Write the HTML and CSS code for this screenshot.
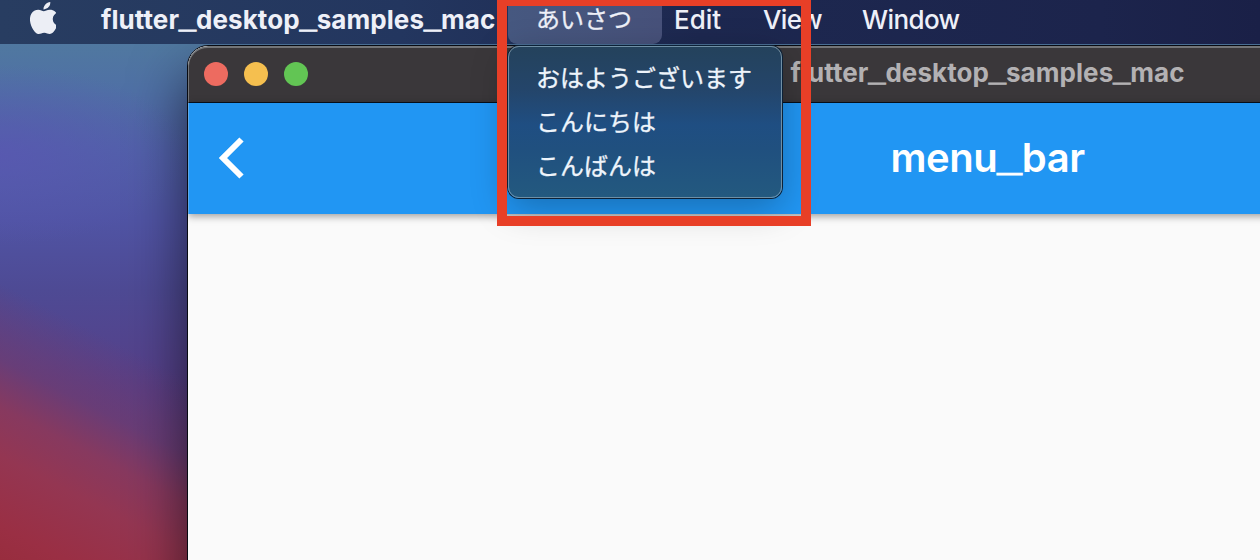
FILE: index.html
```
<!DOCTYPE html>
<html lang="ja">
<head>
<meta charset="utf-8">
<title>flutter_desktop_samples_mac</title>
<link rel="stylesheet" href="styles.css">
</head>
<body>
<div class="desktop">
  <nav class="menubar">
    <svg class="apple" viewBox="2.28 0 18.6 24" preserveAspectRatio="none"><path d="M12.152 6.896c-.948 0-2.415-1.078-3.96-1.04-2.04.027-3.91 1.183-4.961 3.014-2.117 3.675-.546 9.103 1.519 12.09 1.013 1.454 2.208 3.09 3.792 3.039 1.52-.065 2.09-.987 3.935-.987 1.831 0 2.35.987 3.96.948 1.637-.026 2.676-1.48 3.676-2.948 1.156-1.688 1.636-3.325 1.662-3.415-.039-.013-3.182-1.221-3.22-4.857-.026-3.04 2.48-4.494 2.597-4.559-1.429-2.09-3.623-2.324-4.39-2.376-2-.156-3.675 1.09-4.61 1.09zM15.53 3.83c.843-1.012 1.4-2.427 1.245-3.83-1.207.052-2.662.805-3.532 1.818-.78.896-1.454 2.338-1.273 3.714 1.338.104 2.715-.688 3.559-1.701"/></svg>
    <span class="app-name">flutter<span class="us">_</span>desktop<span class="us">_</span>samples<span class="us">_</span>mac</span>
    <span class="menu-item active">あいさつ</span>
    <span class="menu-item edit">Edit</span>
    <span class="menu-item view">View</span>
    <span class="menu-item win">Window</span>
  </nav>
  <main class="window">
    <header class="titlebar">
      <div class="lights"><i class="light close"></i><i class="light minimize"></i><i class="light expand"></i></div>
      <span class="window-title">flutter<span class="us">_</span>desktop<span class="us">_</span>samples<span class="us">_</span>mac</span>
    </header>
    <header class="appbar">
      <svg class="back" viewBox="0 0 25 42"><path d="M22.500 2.500 4 21l18.500 18.500"/></svg>
      <h1 class="page-title">menu<span class="us">_</span>bar</h1>
    </header>
    <section class="content"></section>
  </main>
  <div class="dropdown">
    <div class="option">おはようございます</div>
    <div class="option">こんにちは</div>
    <div class="option">こんばんは</div>
  </div>
  <div class="marker"></div>
</div>
</body>
</html>
```

FILE: styles.css
```
* { box-sizing: border-box; }
body {
  margin: 0;
  width: 1260px;
  height: 560px;
  overflow: hidden;
  font-family: Inter, "Noto Sans CJK JP", sans-serif;
}
.desktop {
  position: relative;
  width: 1260px;
  height: 560px;
  overflow: hidden;
  background:
    linear-gradient(207deg, rgba(112,58,115,0) 60%, rgba(112,60,112,.7) 71%, #87395f 78%, #943652 85%, #9a2f44 95%, #982d3e 100%) 0 0 / 260px 560px no-repeat,
    radial-gradient(ellipse 190px 90px at 0 155px, rgba(90,86,178,.75), rgba(88,86,172,0)),
    linear-gradient(180deg, #5078a0 44px, #4f70a5 90px, #5062a8 150px, #5054a4 220px, #4e4a94 290px, #563f88 390px, #5d3a78 560px);
}
.menubar {
  position: relative;
  display: flex;
  height: 44px;
  background: linear-gradient(90deg, #283d61, #23365f 400px, #1d2850 700px, #1c244c 1100px, #1a2047);
  color: #eef0f8;
  font-size: 26px;
  line-height: 40px;
  letter-spacing: -0.6px;
  white-space: nowrap;
}
.apple {
  width: 26px;
  height: 32px;
  margin: 2px 45px 0 30px;
  fill: #eceef5;
  flex: none;
}
.app-name {
  width: 407px;
  font-weight: 700;
  letter-spacing: 0.08px;
}
.us {
  font-family: "Liberation Sans", Arial, sans-serif;
  font-size: 1.17em;
  font-weight: 700;
  line-height: 0;
  letter-spacing: 0;
  vertical-align: 1px;
  -webkit-text-stroke: 1px currentColor;
}
.active {
  width: 154px;
  padding-left: 28px;
  border-radius: 0 0 9px 9px;
  background: linear-gradient(90deg, #465880, #47517a);
  font-size: 24px;
  -webkit-text-stroke: 0.3px currentColor;
  letter-spacing: 0;
}
.edit { width: 101px; padding-left: 12px; letter-spacing: 0; }
.view { width: 99px; }
.edit, .view, .win { font-weight: 450; }
.window {
  width: 1600px;
  height: 600px;
  margin-top: 1px;
  border: 1px solid #080b12;
  margin-left: 187px;
  border-radius: 21px 21px 0 0;
  background: #fafafa;
  box-shadow: 0 30px 56px rgba(0,0,0,.6);
  overflow: hidden;
}
.titlebar {
  display: grid;
  grid-template-columns: 394px 1fr 394px;
  align-items: center;
  height: 57px;
  padding-bottom: 2px;
  border-top: 2px solid #737578;
  border-left: 1px solid #737578;
  border-bottom: 1px solid #06101e;
  border-radius: 20px 20px 0 0;
  background: #3a373a;
}
.lights { display: flex; gap: 16px; padding-left: 15px; }
.light { width: 24px; height: 24px; border-radius: 50%; }
.close { background: #ed6b60; }
.minimize { background: #f5bf4f; }
.expand { background: #62c554; }
.window-title {
  text-align: center;
  color: #b3b1b3;
  font-size: 26px;
  font-weight: 700;
  letter-spacing: 0.07px;
  line-height: 48px;
  padding-bottom: 2px;
}
.appbar {
  display: grid;
  grid-template-columns: 394px 1fr 394px;
  align-items: center;
  height: 111px;
  padding-bottom: 2px;
  border-left: 1px solid #60a8e8;
  background: #2196f3;
  box-shadow: 0 2px 8px rgba(0,0,0,.4);
}
.back {
  width: 25px;
  height: 42px;
  margin-left: 30px;
  fill: none;
  stroke: #fff;
  stroke-width: 6;
}
.page-title {
  margin: 0;
  text-align: center;
  color: #fff;
  font-size: 40px;
  font-weight: 600;
  letter-spacing: -0.45px;
  line-height: 56px;
}
.page-title .us { font-size: 1.1em; vertical-align: 2px; }
.dropdown {
  position: absolute;
  left: 508px;
  top: 46px;
  width: 274px;
  height: 152px;
  padding: 10px 27px;
  border: 1px solid #6f8fa5;
  border-radius: 11px;
  background: linear-gradient(180deg, #24425c, #24456a 28%, #1f4e82 52%, #20507f 68%, #23597f);
  box-shadow: 0 0 0 1px #0c2137, 0 10px 36px rgba(0,0,0,.27);
  color: #eef4fb;
  font-size: 24px;
  -webkit-text-stroke: 0.3px currentColor;
  line-height: 44px;
  white-space: nowrap;
}
.marker {
  position: absolute;
  left: 497px;
  top: -4px;
  width: 314px;
  height: 230px;
  border: 10px solid #e83f27;
}
```
